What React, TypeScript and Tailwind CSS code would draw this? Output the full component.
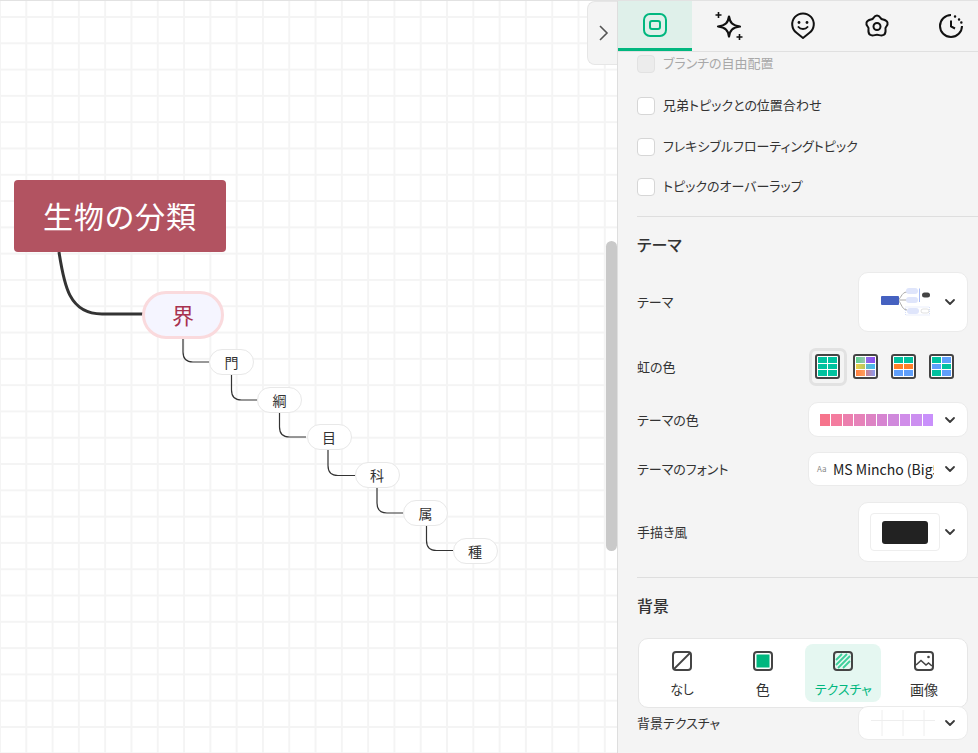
const ink = '#333333';

function Chevron() {
  return (
    <svg width="12" height="8" viewBox="0 0 12 8" fill="none" className="shrink-0">
      <path d="M2 2l4 4 4-4" stroke="#3a3a3a" strokeWidth="1.8" strokeLinecap="round" strokeLinejoin="round" />
    </svg>
  );
}

function Check({ label, disabled, className }: { label: string; disabled?: boolean; className: string }) {
  return (
    <div className={`flex items-center gap-[8px] h-[18px] ${className}`}>
      <div className={`w-[18px] h-[18px] rounded-[4px] border ${disabled ? 'bg-[#ececec] border-[#e2e2e2]' : 'bg-white border-[#d6d6d6]'}`} />
      <span className={`-mt-[2px] text-[13px] ${disabled ? 'text-[#a8a8a8]' : 'text-[#333]'}`}>{label}</span>
    </div>
  );
}

function Palette({ cells, active }: { cells: string[]; active?: boolean }) {
  return (
    <div className={`w-[38px] h-[38px] flex items-center justify-center rounded-[7px] border-[3px] ${active ? 'border-[#e2e2e2]' : 'border-transparent'}`}>
      <div className="w-[25px] h-[25px] shrink-0 grid grid-cols-2 gap-[1px] p-[1px] bg-white rounded-[3px] border-2 border-[#444]">
        {cells.map((c, i) => (
          <div key={i} className={c} />
        ))}
      </div>
    </div>
  );
}

const g = 'bg-[#00c29f]';
const o = 'bg-[#ff7f27]';
const b = 'bg-[#5f9ffb]';

const themeStrip = [
  'bg-[#f6748c]', 'bg-[#f47c9f]', 'bg-[#ec7fae]', 'bg-[#e682b9]', 'bg-[#dd83c4]',
  'bg-[#d684d1]', 'bg-[#d089dc]', 'bg-[#d08de9]', 'bg-[#cc8ff0]', 'bg-[#c990fb]',
];

function Row({ label, className, children }: { label: string; className: string; children: React.ReactNode }) {
  return (
    <div className={`flex items-center justify-between pl-[19px] pr-[10px] ${className}`}>
      <span className="text-[13px] text-[#333]">{label}</span>
      {children}
    </div>
  );
}

function BgOption({ label, active, labelClass, children }: { label: string; active?: boolean; labelClass: string; children: React.ReactNode }) {
  return (
    <div className={`w-[76px] h-[58px] flex flex-col items-center justify-between pt-[6px] pb-[5px] rounded-[8px] ${active ? 'bg-[#e5f7f1]' : ''}`}>
      <svg width="22" height="22" viewBox="0 0 22 22" fill="none">{children}</svg>
      <span className={`leading-[16px] ${labelClass} ${active ? 'text-[#00b77f]' : 'text-[#333]'}`}>{label}</span>
    </div>
  );
}

function Sub({ t, className }: { t: string; className: string }) {
  return (
    <div className={`absolute w-[45px] h-[26px] rounded-full border border-[#e8e8e8] bg-white flex items-center justify-center text-[14px] text-[#333] ${className}`}>
      {t}
    </div>
  );
}

export default function App() {
  return (
    <div
      className="w-[978px] h-[753px] flex overflow-hidden border-t border-[#e2e2e2] bg-white [font-feature-settings:'palt']"
      style={{ fontFamily: '"Noto Sans CJK JP", "Noto Sans", sans-serif' }}
    >
      {/* canvas */}
      <div className="relative w-[617px] shrink-0 h-full bg-white bg-[linear-gradient(to_right,#f4f4f4_2px,transparent_2px),linear-gradient(to_bottom,#f4f4f4_2px,transparent_2px)] bg-[size:26.3px_26.3px] bg-[position:-1px_15px]">
        <svg width="617" height="753" viewBox="0 1 617 753" fill="none" className="absolute left-0 top-0">
          <path d="M59 252C64 285 69 314 102 314H143" stroke="#333" strokeWidth="3" />
          <path d="M183 338V352Q183 362 193 362H209" stroke={ink} strokeWidth="1.2" />
          <path d="M231.5 375V390Q231.5 400 241.5 400H257" stroke={ink} strokeWidth="1.2" />
          <path d="M279.5 412V427Q279.5 437 289.5 437H306" stroke={ink} strokeWidth="1.2" />
          <path d="M328 450V465.5Q328 475.5 338 475.5H355" stroke={ink} strokeWidth="1.2" />
          <path d="M377 488V503Q377 513 387 513H403" stroke={ink} strokeWidth="1.2" />
          <path d="M426.5 526V540.5Q426.5 550.5 436.5 550.5H453" stroke={ink} strokeWidth="1.2" />
        </svg>

        <div className="absolute left-[14px] top-[179px] w-[212px] h-[72px] pb-[2px] rounded-[4px] bg-[#b25361] flex items-center justify-center text-white text-[30px] tracking-[1px]">
          生物の分類
        </div>
        <div className="absolute left-[142px] top-[290px] w-[82px] h-[48px] pb-[2px] rounded-full border-[3px] border-[#fadadd] bg-[#f5f5ff] flex items-center justify-center text-[22px] text-[#a8324f]">
          界
        </div>
        <Sub t="門" className="left-[209px] top-[348px]" />
        <Sub t="綱" className="left-[257px] top-[386px]" />
        <Sub t="目" className="left-[306.5px] top-[423px]" />
        <Sub t="科" className="left-[354.5px] top-[461px]" />
        <Sub t="属" className="left-[403px] top-[499px]" />
        <Sub t="種" className="left-[452.5px] top-[537px]" />

        {/* scrollbar */}
        <div className="absolute right-0 top-[240px] w-[11px] h-[310px] rounded-full bg-[#c9c9c9]" />

        {/* collapse handle */}
        <div className="absolute right-0 top-0 w-[30px] h-[64px] rounded-l-[8px] bg-[#f4f4f4] border border-r-0 border-[#e6e6e6] flex items-center justify-center">
          <svg width="12" height="18" viewBox="0 0 12 18" fill="none">
            <path d="M3 2l7 7-7 7" stroke="#555" strokeWidth="1.6" />
          </svg>
        </div>
      </div>

      {/* side panel */}
      <div className="w-[361px] shrink-0 h-full bg-[#f4f4f4] border-l border-[#dedede] flex flex-col">
        <div className="h-[51px] shrink-0 flex border-b border-[#e0e0e0]">
          <div className="w-[74px] shrink-0 h-[50px] bg-[#dff0ea] border-b-[3px] border-[#00b77f] flex items-center justify-center">
            <svg width="26" height="26" viewBox="0 0 26 26" fill="none">
              <rect x="2" y="2" width="22" height="22" rx="6" stroke="#00b77f" strokeWidth="2" />
              <rect x="8" y="9" width="10" height="8" rx="2" stroke="#00b77f" strokeWidth="2" />
            </svg>
          </div>
          <div className="w-[74px] shrink-0 flex items-center justify-center">
            <svg width="30" height="30" viewBox="0 0 30 30" fill="none">
              <path d="M15 5.500C16 12 18.500 14.500 26 15.500C18.500 16.500 16 19 15 25.500C14 19 11.500 16.500 4 15.500C11.500 14.500 14 12 15 5.500Z" stroke="#111" strokeWidth="2.200" strokeLinejoin="round" />
              <path d="M4.500 1v6M1.500 4h6M25.500 23v6M22.500 26h6" stroke="#111" strokeWidth="1.600" />
            </svg>
          </div>
          <div className="w-[74px] shrink-0 flex items-center justify-center">
            <svg width="26" height="28" viewBox="0 0 26 28" fill="none">
              <path d="M13 26L6.500 20.800A10.800 10.800 0 1 1 19.500 20.800Z" stroke="#111" strokeWidth="2" strokeLinejoin="round" />
              <circle cx="9" cy="10.500" r="1.400" fill="#111" />
              <circle cx="17" cy="10.500" r="1.400" fill="#111" />
              <path d="M8.500 15C10.500 17.500 15.500 17.500 17.500 15" stroke="#111" strokeWidth="2" strokeLinecap="round" />
            </svg>
          </div>
          <div className="w-[74px] shrink-0 flex items-center justify-center">
            <svg width="26" height="26" viewBox="0 0 26 26" fill="none">
              <path d="M13 2.500C15.500 2.500 16.500 5 17.500 6C19 6.800 22.500 6.500 23.500 9.500C24.300 12 22 13.500 21.500 15C21.300 17 22.500 20 20 21.800C17.800 23.400 15 21.800 13 21.800C11 21.800 8.200 23.400 6 21.800C3.500 20 4.700 17 4.500 15C4 13.500 1.700 12 2.500 9.500C3.500 6.500 7 6.800 8.500 6C9.500 5 10.500 2.500 13 2.500Z" stroke="#111" strokeWidth="2" strokeLinejoin="round" />
              <circle cx="13" cy="13.500" r="3.500" stroke="#111" strokeWidth="2" />
            </svg>
          </div>
          <div className="w-[74px] shrink-0 flex items-center justify-center">
            <svg width="26" height="26" viewBox="0 0 26 26" fill="none">
              <path d="M13 2A11 11 0 1 0 24 13" stroke="#111" strokeWidth="2" />
              <path d="M13 7.500V13.500L17 15.500" stroke="#111" strokeWidth="2" />
              <path d="M17 3.500h.1M21 6.500h.1M23.300 9.500h.1" stroke="#111" strokeWidth="2.400" strokeLinecap="round" />
            </svg>
          </div>
        </div>

        <div className="pl-[19px]">
          <Check label="ブランチの自由配置" disabled className="mt-[3px]" />
          <Check label="兄弟トピックとの位置合わせ" className="mt-[24px]" />
          <Check label="フレキシブルフローティングトピック" className="mt-[23px]" />
          <Check label="トピックのオーバーラップ" className="mt-[22px]" />
        </div>

        <div className="ml-[19px] mt-[20px] h-px shrink-0 bg-[#dedede]" />
        <div className="pl-[19px] mt-[16px] h-[22px] flex items-center text-[16px] font-medium text-[#333]">テーマ</div>

        <Row label="テーマ" className="mt-[17px]">
          <div className="w-[110px] h-[60px] rounded-[10px] bg-white border border-[#ebebeb] flex items-center pl-[22px] pr-[11px] justify-between">
            <svg width="50" height="28" viewBox="0 0 50 28" fill="none">
              <path d="M16 12C20 12 20 4 26 4M16 12H26M16 12C20 12 20 22 26 22" stroke="#aaa" />
              <rect x="0" y="8" width="18" height="9" rx="1" fill="#4561c0" />
              <rect x="25" y="0" width="12" height="6" rx="3" fill="#dfe5fb" />
              <rect x="25" y="9" width="12" height="6" rx="3" fill="#dfe5fb" />
              <rect x="24.500" y="19" width="24" height="8" stroke="#c5d2f7" strokeWidth="0.700" strokeDasharray="1 1" />
              <rect x="26" y="20" width="12" height="6" rx="3" fill="#dfe5fb" />
              <rect x="40" y="21" width="8" height="4" rx="2" fill="#fff" stroke="#ccc" strokeWidth="0.600" />
              <path d="M38.500 0.500V14" stroke="#a9bdf5" />
              <rect x="41" y="4.500" width="8" height="5" rx="2.500" fill="#444" />
            </svg>
            <Chevron />
          </div>
        </Row>

        <div className="flex items-center justify-between pl-[19px] pr-[17.500px] mt-[15px] h-[39px]">
          <span className="text-[13px] text-[#333]">虹の色</span>
          <div className="flex items-center">
            <Palette active cells={[g, g, g, g, g, g]} />
            <Palette cells={['bg-[linear-gradient(90deg,#5cd08e,#9ac6b0)]', 'bg-[linear-gradient(90deg,#8f6be8,#8b4df0)]', 'bg-[linear-gradient(90deg,#ecd04a,#b8c860)]', 'bg-[linear-gradient(90deg,#60b8c8,#45b8f5)]', 'bg-[linear-gradient(90deg,#ff7f3e,#ffa060)]', 'bg-[linear-gradient(90deg,#c88090,#8c9cf0)]']} />
            <Palette cells={[g, g, o, o, b, b]} />
            <Palette cells={[g, b, b, g, g, b]} />
          </div>
        </div>

        <Row label="テーマの色" className="mt-[16px]">
          <div className="w-[160px] h-[35px] rounded-[10px] bg-white border border-[#ebebeb] flex items-center pl-[11px] pr-[11px] justify-between">
            <div className="flex gap-px">
              {themeStrip.map((c) => (
                <div key={c} className={`w-[10.400px] h-[12px] ${c}`} />
              ))}
            </div>
            <Chevron />
          </div>
        </Row>

        <Row label="テーマのフォント" className="mt-[15px]">
          <div className="w-[160px] h-[34px] rounded-[10px] bg-white border border-[#ebebeb] flex items-center pl-[8px] pr-[11px] justify-between">
            <span className="text-[8px] text-[#888] w-[16px] shrink-0">Aa</span>
            <span className="w-[101px] overflow-hidden whitespace-nowrap text-[14px] text-[#222] mr-auto">MS Mincho (Big5)</span>
            <Chevron />
          </div>
        </Row>

        <Row label="手描き風" className="mt-[16px]">
          <div className="w-[110px] h-[60px] rounded-[10px] bg-white border border-[#ebebeb] flex items-center pl-[11px] pr-[11px] justify-between">
            <div className="w-[70px] h-[38px] rounded-[4px] border border-[#eeeeee] flex items-center justify-center">
              <div className="w-[46px] h-[23px] rounded-[3px] bg-[#222]" />
            </div>
            <Chevron />
          </div>
        </Row>

        <div className="ml-[19px] mt-[15px] h-px shrink-0 bg-[#dedede]" />
        <div className="pl-[19px] mt-[16px] h-[22px] flex items-center text-[16px] font-medium text-[#333]">背景</div>

        <div className="ml-[20px] mt-[22px] w-[330px] h-[70px] rounded-[10px] bg-white border border-[#e6e6e6] flex items-center justify-between px-[5px]">
          <BgOption label="なし" labelClass="text-[13px]">
            <rect x="2" y="2" width="18" height="18" rx="3" stroke="#444" strokeWidth="2" />
            <path d="M3 19L19 3" stroke="#444" strokeWidth="1.800" />
          </BgOption>
          <BgOption label="色" labelClass="text-[14px]">
            <rect x="2" y="2" width="18" height="18" rx="3" stroke="#444" strokeWidth="2" />
            <rect x="4.500" y="4.500" width="13" height="13" fill="#00b77f" />
          </BgOption>
          <BgOption label="テクスチャ" active labelClass="text-[13px]">
            <rect x="2" y="2" width="18" height="18" rx="3" stroke="#444" strokeWidth="2" />
            <path d="M4 10L10 4M4 15L15 4M6 18L18 6M11 18L18 11" stroke="#3ecf9b" strokeWidth="1.800" />
          </BgOption>
          <BgOption label="画像" labelClass="text-[14px]">
            <rect x="2" y="2" width="18" height="18" rx="3" stroke="#444" strokeWidth="2" />
            <path d="M3 15L8 10.500L13 15L15.500 13L19 16" stroke="#444" strokeWidth="1.600" />
            <circle cx="15.500" cy="7" r="1.300" fill="#444" />
          </BgOption>
        </div>

        <div className="flex items-center justify-between pl-[19px] pr-[10px] -mt-[2px]">
          <span className="text-[13px] text-[#333]">背景テクスチャ</span>
          <div className="w-[110px] h-[34px] rounded-[10px] bg-white border border-[#ebebeb] flex items-center pl-[12px] pr-[11px] justify-between">
            <svg width="64" height="26" viewBox="0 0 64 26" fill="none">
              <path d="M0 10.500H64M11 0V26M32 0V26M53 0V26" stroke="#eeeeee" />
            </svg>
            <Chevron />
          </div>
        </div>
      </div>
    </div>
  );
}
